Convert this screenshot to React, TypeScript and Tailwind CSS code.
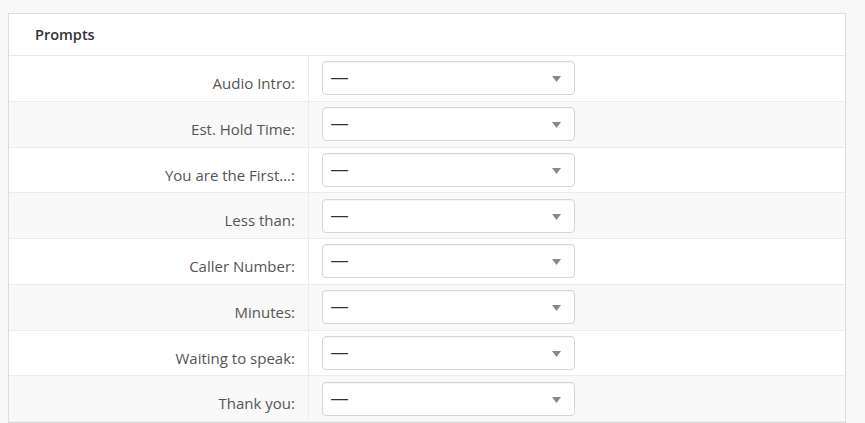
import React from "react";

const labels = [
  "Audio Intro:",
  "Est. Hold Time:",
  "You are the First...:",
  "Less than:",
  "Caller Number:",
  "Minutes:",
  "Waiting to speak:",
  "Thank you:",
];

function Select() {
  return (
    <div className="relative flex h-[34px] w-[253px] items-center rounded-[4px] border border-[#d5d5d5] bg-white pl-[8px] shadow-[inset_0_1px_1px_rgba(0,0,0,0.04)]">
      <span
        className="text-[17px] leading-[20px] text-[#333]"
        style={{ fontFamily: '"Liberation Sans", Arial, sans-serif' }}
      >
        —
      </span>
      <svg
        className="absolute right-[13px] top-[14px]"
        width="9"
        height="6"
        viewBox="0 0 9 6"
      >
        <path d="M0 0 L9 0 L4.5 6 Z" fill="#888" />
      </svg>
    </div>
  );
}

export default function App() {
  return (
    <div
      className="h-[423px] w-[865px] overflow-hidden bg-[#f8f8f8] pl-[8px] pt-[13px]"
      style={{ fontFamily: '"Open Sans", "Noto Sans", sans-serif' }}
    >
      <div className="w-[838px] border border-[#dddddd] bg-white">
        <div className="h-[42px] border-b border-[#e9e9e9] pl-[26px] pt-[8px]">
          <span className="text-[14.5px] font-semibold leading-[20px] text-[#333]">
            Prompts
          </span>
        </div>
        {labels.map((label, i) => (
          <div
            key={label}
            className={`flex h-[45.75px] border-b border-[#ececec] ${
              i % 2 === 1 ? "bg-[#f9f9f9]" : "bg-white"
            }`}
          >
            <div className="flex w-[300px] justify-end border-r border-[#ececec] pr-[13px] pt-[17px]">
              <span className="text-[15px] leading-[20px] text-[#555]">
                {label}
              </span>
            </div>
            <div className="flex items-center pl-[13px]">
              <Select />
            </div>
          </div>
        ))}
      </div>
    </div>
  );
}
